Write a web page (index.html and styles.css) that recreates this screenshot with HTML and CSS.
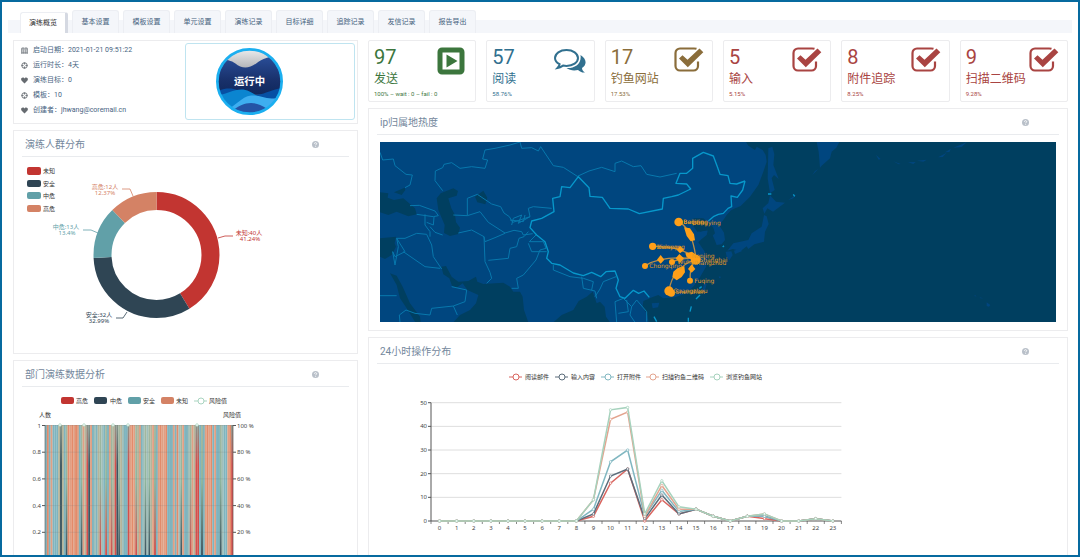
FILE: index.html
```html
<!DOCTYPE html>
<html lang="zh-CN">
<head>
<meta charset="utf-8">
<title>演练概览</title>
<link rel="stylesheet" href="styles.css">
</head>
<body>
<svg class="defs" aria-hidden="true">
  <symbol id="i-help" viewBox="0 0 14 14"><circle cx="7" cy="7" r="7" fill="#b9c0c9"/><path d="M4.8 5.4C4.8 2.6 9.3 2.7 9.3 5.3C9.3 7 7.2 7 7.2 8.6M7.2 10v1.5" fill="none" stroke="#fff" stroke-width="1.8"/></symbol>
  <symbol id="i-cal" viewBox="0 0 14 14"><path d="M1 2.500h12v11H1zM1 4.500h12M4 0v4M10 0v4M4.500 5v8M9.500 5v8M1 8h12M1 11h12" fill="none" stroke="#73787e" stroke-width="1.300"/></symbol>
  <symbol id="i-globe" viewBox="0 0 14 14"><circle cx="7" cy="7" r="5.500" fill="none" stroke="#73787e" stroke-width="2"/><path d="M7 1v4M7 9v4M1 7h4M9 7h4" stroke="#73787e" stroke-width="2.400"/></symbol>
  <symbol id="i-heart" viewBox="0 0 14 14"><path d="M7 13L1 7C-1 4 1 1 3.700 1C5.500 1 6.500 2 7 3C7.500 2 8.500 1 10.300 1C13 1 15 4 13 7z" fill="#666b70"/></symbol>
  <symbol id="i-check" viewBox="0 0 30 26"><path d="M22.500 1.800C21.500 1.500 21 1.500 20 1.500H6A4.500 4.500 0 0 0 1.500 6V19A4.500 4.500 0 0 0 6 23.500H19.500A4.500 4.500 0 0 0 24 19V14.500" fill="none" stroke="currentColor" stroke-width="2.200"/><path d="M5 11.500L8.500 8.200L13.500 12.800L25.500 1.500L29.300 5.300L13.800 20.300z" fill="currentColor"/></symbol>
</svg>
<div class="frame">
  <nav class="tabs">
    <button class="tab active">演练概览</button><button class="tab">基本设置</button><button class="tab">模板设置</button><button class="tab">单元设置</button><button class="tab">演练记录</button><button class="tab">目标详细</button><button class="tab">追踪记录</button><button class="tab">发信记录</button><button class="tab">报告导出</button>
  </nav>
  <main class="content">
    <div class="column">
      <section class="card info">
        <ul class="facts">
          <li><svg><use href="#i-cal"/></svg>启动日期：2021-01-21 09:51:22</li>
          <li><svg><use href="#i-globe"/></svg>运行时长：4天</li>
          <li><svg><use href="#i-heart"/></svg>演练目标：0</li>
          <li><svg><use href="#i-globe"/></svg>模板：10</li>
          <li><svg><use href="#i-heart"/></svg>创建者：jhwang@coremail.cn</li>
        </ul>
        <div class="status">
          <svg class="badge" viewBox="0 0 200 200">
            <defs>
              <clipPath id="disc"><circle cx="100" cy="100" r="94"/></clipPath>
              <linearGradient id="navy" x2="0" y2="1"><stop stop-color="#3058a8"/><stop offset=".7" stop-color="#18306a"/><stop offset="1" stop-color="#10285c"/></linearGradient>
              <linearGradient id="silver" x2="0" y2="1"><stop stop-color="#f0f0f0"/><stop offset="1" stop-color="#b4b6ba"/></linearGradient>
            </defs>
            <g clip-path="url(#disc)">
              <rect width="200" height="140" fill="url(#navy)"/>
              <path d="M0 0H200V24C165 22 140 30 120 46C95 64 75 60 58 46C45 36 30 34 0 34z" fill="url(#silver)"/>
              <path d="M0 130C45 112 60 125 90 136C130 150 155 125 200 118V200H0z" fill="#0650a4"/>
              <path d="M0 142C35 140 65 112 100 130C140 152 165 168 200 158V200H0z" fill="#0b85d0"/>
              <path d="M30 185C55 178 75 145 105 142C140 140 150 160 200 145V200H30z" fill="#3eaef0"/>
              <path d="M45 190C80 160 115 155 150 180L150 200H45z" fill="#2454a6"/>
            </g>
            <circle cx="100" cy="100" r="96" fill="none" stroke="#1baff0" stroke-width="8"/>
            <text x="100" y="111" class="badge-text">运行中</text>
          </svg>
        </div>
      </section>
      <section class="card">
        <header class="head"><h2>演练人群分布</h2><svg class="help"><use href="#i-help"/></svg></header>
        <svg class="chart" viewBox="22 156 327 196">
          <g class="legend">
            <rect x="27" y="166" width="14" height="8" rx="2" fill="#c23531"/><text x="43" y="172">未知</text>
            <rect x="27" y="179" width="14" height="7" rx="2" fill="#2f4554"/><text x="43" y="185">安全</text>
            <rect x="27" y="191" width="14" height="7" rx="2" fill="#61a0a8"/><text x="43" y="197">中危</text>
            <rect x="27" y="204" width="14" height="7" rx="2" fill="#d48265"/><text x="43" y="210">高危</text>
          </g>
          <g class="donut" transform="rotate(-90 156.500 254)">
            <circle cx="156.500" cy="254" r="54" pathLength="10000" stroke="#c23531" stroke-dasharray="4124 5876"/>
            <circle cx="156.500" cy="254" r="54" pathLength="10000" stroke="#2f4554" stroke-dasharray="3299 6701" stroke-dashoffset="-4124"/>
            <circle cx="156.500" cy="254" r="54" pathLength="10000" stroke="#61a0a8" stroke-dasharray="1340 8660" stroke-dashoffset="-7423"/>
            <circle cx="156.500" cy="254" r="54" pathLength="10000" stroke="#d48265" stroke-dasharray="1237 8763" stroke-dashoffset="-8763"/>
          </g>
          <g fill="none" stroke-width=".8">
            <path d="M218 237L225 235H233" stroke="#c23531"/><path d="M127 311L123 317H116" stroke="#2f4554"/>
            <path d="M98 232L91 229H83" stroke="#61a0a8"/><path d="M133 195L130 188H122" stroke="#d48265"/>
          </g>
          <g class="pie-labels">
            <g fill="#c23531"><text x="249" y="234">未知:40人</text><text x="250" y="240">41.24%</text></g>
            <g fill="#2f4554"><text x="99" y="316">安全:32人</text><text x="99" y="322">32.99%</text></g>
            <g fill="#61a0a8"><text x="66" y="228">中危:13人</text><text x="67" y="234">13.4%</text></g>
            <g fill="#d48265"><text x="105" y="188">高危:12人</text><text x="105" y="194">12.37%</text></g>
          </g>
        </svg>
      </section>
      <section class="card">
        <header class="head"><h2>部门演练数据分析</h2><svg class="help"><use href="#i-help"/></svg></header>
        <svg class="chart" id="departments" viewBox="22 386 327 200">
          <g class="legend">
            <rect x="61" y="396" width="13" height="7" rx="2" fill="#c23531"/><text x="76" y="402">高危</text>
            <rect x="94" y="396" width="13" height="7" rx="2" fill="#2f4554"/><text x="110" y="402">中危</text>
            <rect x="128" y="396" width="13" height="7" rx="2" fill="#61a0a8"/><text x="143" y="402">安全</text>
            <rect x="161" y="396" width="13" height="7" rx="2" fill="#d48265"/><text x="176" y="402">未知</text>
            <path d="M194 400H207" stroke="#a9d4c0"/><circle cx="201" cy="400" r="3" fill="#fff" stroke="#a9d4c0"/><text x="209" y="402">风险值</text>
            <text x="39" y="416">人数</text><text x="223" y="416">风险值</text>
          </g>
        </svg>
      </section>
    </div>
    <div class="column">
      <div class="stats">
        <article class="card stat green"><div class="copy"><strong>97</strong><span>发送</span><small>100% – wait : 0 – fail : 0</small></div>
          <svg viewBox="0 0 28 28"><rect x="3" y="3" width="22" height="22" rx="2" fill="none" stroke="currentColor" stroke-width="5"/><path d="M9.500 7.500L20.500 14L9.500 20.500z" fill="currentColor"/></svg></article>
        <article class="card stat blue"><div class="copy"><strong>57</strong><span>阅读</span><small>58.76%</small></div>
          <svg viewBox="0 0 32 28"><path d="M12.500 3C19 3 24 6.500 24 11S19 19 12.500 19C11 19 10 18.800 9 18.600C7 20 5 20.800 3.500 21C5 19.500 5.500 18.500 5.600 17.200C2.800 15.800 1 13.500 1 11C1 6.500 6 3 12.500 3z" fill="none" stroke="currentColor" stroke-width="2"/><path d="M26.500 8C33 12 33 18 28 21C28 23 29.500 24.500 31 25.500C28 25.800 26 24.800 24 23C19.500 24 15.500 23.200 12.500 21C20 21.500 28 17.500 26.500 8z" fill="currentColor"/></svg></article>
        <article class="card stat brown"><div class="copy"><strong>17</strong><span>钓鱼网站</span><small>17.53%</small></div><svg><use href="#i-check"/></svg></article>
        <article class="card stat red"><div class="copy"><strong>5</strong><span>输入</span><small>5.15%</small></div><svg><use href="#i-check"/></svg></article>
        <article class="card stat red"><div class="copy"><strong>8</strong><span>附件追踪</span><small>8.25%</small></div><svg><use href="#i-check"/></svg></article>
        <article class="card stat red"><div class="copy"><strong>9</strong><span>扫描二维码</span><small>9.28%</small></div><svg><use href="#i-check"/></svg></article>
      </div>
      <section class="card">
        <header class="head"><h2>ip归属地热度</h2><svg class="help"><use href="#i-help"/></svg></header>
        <svg class="map" viewBox="30 21 2028 540">
          <rect x="30" y="21" width="2028" height="540" fill="#003f60"/>
          <g fill="#00467f">
            <path d="M30 21H1128L1135 32L1155 45L1160 35L1178 45L1187 60L1190 80L1180 110L1165 150L1140 185L1112 213L1092 221L1083 226L1070 240L1060 255L1047 270L1062 293L1065 315L1055 328L1040 330L1032 310L1022 288L1008 270L995 250L980 258L968 270L982 290L1012 286L1015 296L995 312L985 322L1003 348L1012 368L1008 395L988 430L972 452L950 475L915 487L880 490L865 480L846 487L835 492L820 498L818 515L832 540L836 562H720L708 545L704 515L690 500L680 505L668 470L650 485L626 498L610 525L575 540L550 562H475L462 525L458 485L450 470L430 470L420 455L400 443L340 447L322 440L318 425L295 438L265 440L245 425L228 393L214 395L220 418L238 430L246 452L260 458L278 445L292 465L325 480L318 505L300 525L270 540L250 562H30z"/>
            <path d="M1195 40L1207 35L1213 58L1210 90L1226 132L1212 120L1205 130L1214 165L1200 175L1193 130z"/>
            <path d="M1200 181L1218 200L1245 203L1209 230L1192 220L1183 236L1178 220L1195 204z"/>
            <path d="M1182 240L1190 244L1196 267L1185 290L1182 320L1153 328L1135 342L1130 334L1112 348L1088 342L1072 347L1090 325L1135 315L1145 295L1175 275z"/>
            <path d="M1092 347L1112 340L1115 349L1095 357zM1067 350L1084 349L1088 360L1078 376L1070 365z"/>
            <path d="M1340 21H1408L1399 38L1385 50L1380 70L1355 92L1350 98L1346 50z"/>
            <path d="M1327 120L1345 102L1335 108zM1255 195L1280 178L1270 190zM1518 60L1532 72L1526 74zM1570 79L1592 87L1586 88zM1614 82L1637 81L1630 87zM1641 77L1670 74L1660 80zM1704 67L1730 53L1718 66zM1725 52L1743 41L1738 51zM1750 38L1790 22L1775 36zM1814 480L1820 484L1814 484zM1828 487L1840 490L1832 490zM1850 502L1861 510L1857 515L1850 513zM845 505L868 503L864 517L848 520zM1003 445L1010 448L1003 472L997 464zM1046 424L1054 426L1048 430z"/>
          </g>
          <g fill="#003f60">
            <path d="M30 172L55 175L53 188L72 195L100 190L135 220L140 238L115 244L80 230L55 240L30 232zM72 172L104 158L106 165L95 180zM200 190L212 175L250 160L264 168L260 182L235 190L244 220L255 240L258 262L270 278L265 297L240 303L222 294L224 270L205 225zM315 185L340 167L352 188L346 208L322 202zM30 310L78 305L74 325L78 335L65 360L45 372L30 365zM60 415L80 422L98 455L120 505L150 545L152 562H136L110 520L90 490L80 450z"/>
            <path d="M970 250L1000 250L1014 262L1030 278L1035 295L1020 310L1010 298L1015 285L990 290L978 272z"/>
          </g>
          <path class="borders" d="M30 52L38 75L70 72L75 92L108 118L127 120L120 150L105 158M218 167L205 150L195 137L196 108L218 98L222 88L245 83L270 100L305 95L345 100L353 75L338 72L345 45L375 40L420 30L450 21M450 21L455 40L485 38L505 48L512 35L550 92L580 97L622 124L657 108L695 97L735 110L735 85L755 78L790 95L813 92L830 118L870 126L920 115M120 212L148 211L195 228L205 242L190 245L140 238M165 238L165 270L180 290L180 305M170 262L190 270L192 246M180 275L195 292L218 300M292 242V190L322 178L365 207L392 215L402 234L418 245L428 262L480 245L475 220L490 215L545 220M250 240L292 242L330 230L355 262L405 294L432 286L455 290L460 300L488 296M265 294L305 285L342 305L345 320L375 308L405 295M342 305L345 380L360 412L365 430L350 445M355 376L415 370L420 340L440 335L447 310L462 305L475 290M498 300L478 320L520 320L528 340L510 345L498 375L460 420L440 430L445 460L425 460M475 325L485 350L530 350M550 390L550 405L600 425L640 430M635 425L640 460L675 468L680 490M640 430L670 440L665 465M675 485L690 462L700 440L738 425M75 390L85 335L80 310L105 310L140 295L170 298M170 298L185 330L190 365L215 402M80 310L105 350L75 365L68 350L75 390M100 350L165 395L210 400M30 482H80M90 562L88 540L108 525L135 535L180 540L185 520L250 513L285 500L290 465L245 455M250 513L262 540M740 562L735 500L760 490M760 490L785 515L800 495L830 530L830 560M770 495L775 530L745 535M785 515L780 540L795 562M425 270L430 250L455 240L445 265L480 245M420 255L460 260L465 240"/>
          <path class="china" d="M1125 138L1118 165L1102 187L1083 183L1085 215L1074 220L1060 235L1045 238L1030 245L1015 258M1125 138L1100 147L1080 145L1074 122L1050 118L1042 95L1030 63L1000 52L968 70L968 100L950 115L930 115L918 145L950 147L962 162L925 180L905 185L880 190L877 222L808 236L775 222L720 220L697 187L660 184L657 158L625 125L600 158L575 155L570 185L548 190L552 230L515 250L485 258L480 278L500 300L525 320L535 350L530 370L545 385L570 390L610 414L640 422L665 412L692 425L708 410L735 408L745 435L738 460L750 485L765 490L790 466L806 475L822 468L838 487M960 530L964 514M955 548L955 560M978 492L990 480M988 460L995 455M852 545L860 560M1194 177H1204M1270 178L1274 184M1058 336L1062 332"/>
          <g fill="none" stroke="#b98d49" stroke-width="4"><path d="M928 262Q966 280 978 370M848 334Q930 332 978 370M826 392Q875 360 978 372M906 381Q945 365 978 372M897 468Q906 400 978 372M962 437Q955 405 978 372"/></g>
          <g fill="#ff9f18"><circle cx="926" cy="261" r="13"/><circle cx="848" cy="334" r="11"/><circle cx="825" cy="393" r="9"/><circle cx="906" cy="381" r="9"/><circle cx="897" cy="468" r="14"/><circle cx="904" cy="474" r="11"/><circle cx="960" cy="437" r="9"/><circle cx="977" cy="374" r="15"/><path d="M942 277L960 280L972 298L975 316L962 319L950 303zM930 332L943 345L930 355L920 344zM872 360L883 374L872 386L861 374zM928 357L942 370L930 384L917 370zM946 355L966 350L980 361L969 375L950 367zM943 393L945 412L935 426L920 436L907 426L910 410L922 400zM965 388L976 402L965 413L954 402z"/></g>
          <g class="cities"><text x="940" y="268">Beijing</text><text x="940" y="268">Baoding</text><text x="966" y="269">Dongying</text><text x="860" y="341">Delong</text><text x="860" y="341">Xianyang</text><text x="838" y="400">Chongqing</text><text x="922" y="387">Wuhan</text><text x="965" y="370">Nanjing</text><text x="988" y="382">Shanghai</text><text x="978" y="389">Hangzhou</text><text x="973" y="444">Fuqing</text><text x="910" y="475">Guangzhou</text><text x="916" y="478">Shenzhen</text></g>
        </svg>
      </section>
      <section class="card">
        <header class="head"><h2>24小时操作分布</h2><svg class="help"><use href="#i-help"/></svg></header>
        <svg class="chart" id="hours" viewBox="377 364 682 200"></svg>
      </section>
    </div>
  </main>
</div>
<script src="charts.js"></script>
</body>
</html>
```
FILE: styles.css
```css
* { box-sizing: border-box; }
body {
  margin: 0;
  background: #fff;
  color: #47637f;
  font: 7px/15px Roboto, "Noto Sans CJK SC", sans-serif;
}
.defs { position: absolute; width: 0; height: 0; }
.frame {
  height: 100vh;
  overflow: hidden;
  border: 2px solid #076a9f;
  padding: 8px 6px 0;
}
.tabs {
  display: flex;
  gap: 4px;
  height: 23px;
  padding-left: 12px;
  background: linear-gradient(#fff 10px, #f4f6fa 10px);
}
.tab {
  width: 47px;
  padding: 0;
  border: 1px solid #eceef3;
  border-bottom: 0;
  border-radius: 3px 3px 0 0;
  background: #f4f6fa;
  color: #47637f;
  font: inherit;
}
.tab.active {
  width: 48px;
  margin-top: 2px;
  border-right: 3px solid #d5d9e2;
  background: #fff;
  color: #333;
}
.content {
  display: grid;
  grid-template-columns: minmax(0, 345fr) minmax(0, 700fr);
  gap: 10px;
  padding: 7px 4px 0 5px;
}
.column { display: flex; flex-direction: column; gap: 6px; }
.card { border: 1px solid #ececee; background: #fff; }
.info { display: flex; gap: 8px; padding: 2px 2px 3px; }
.facts { flex: 1; margin: 0; padding: 0 0 0 5px; list-style: none; white-space: nowrap; }
.facts li { display: flex; align-items: center; gap: 5px; height: 15px; }
.facts svg { width: 7px; height: 7px; }
.status {
  width: 170px;
  padding: 4px 30px;
  border: 1px solid #bfe4f0;
  border-radius: 3px;
}
.badge { display: block; width: 67px; height: 67px; }
.badge-text { fill: #fff; font-size: 31px; font-weight: 700; text-anchor: middle; }
.head {
  display: flex;
  align-items: center;
  justify-content: space-between;
  height: 26px;
  margin: 0 8px;
  padding: 2px 30px 0 3px;
  border-bottom: 1px solid #e9ebee;
}
.head h2 { margin: 0; color: #73879c; font-size: 10px; font-weight: 400; line-height: 14px; }
.help { width: 7px; height: 7px; }
.chart { display: block; width: auto; margin: 0 8px; font-family: "Noto Sans", "Noto Sans CJK SC", sans-serif; }
.map { display: block; width: auto; margin: 7px 11px 8px; }
.legend { fill: #333; font-size: 6px; }
.donut { fill: none; stroke-width: 18px; }
.pie-labels { font-size: 6px; text-anchor: middle; }
.axis { fill: #444; font-size: 6px; }
.axis .end { text-anchor: end; }
.axis .mid { text-anchor: middle; }
.borders { fill: none; stroke: #0878ad; stroke-width: 3px; stroke-linejoin: round; }
.china { fill: none; stroke: #0798cb; stroke-width: 4px; stroke-linejoin: round; }
.cities { fill: #e39a22; font-family: "DejaVu Sans", sans-serif; font-size: 18px; }
.stats { display: grid; grid-template-columns: repeat(6, minmax(0, 1fr)); gap: 10px; }
.stat { display: flex; padding: 5px 8px 3px 5px; border-radius: 2px; }
.stat svg { flex: none; width: 30px; height: 26px; margin-top: 1px; }
.stat.green svg { width: 28px; height: 28px; margin-right: 2px; }
.stat.blue svg { width: 32px; height: 28px; }
.copy { display: flex; flex: 1 1 0; flex-direction: column; min-width: 0; white-space: nowrap; }
.copy strong { font-size: 20px; font-weight: 400; line-height: 22px; }
.copy span { font-size: 12px; font-weight: 400; line-height: 22px; }
.copy small { font-size: 6px; line-height: 8px; }
.green { color: #3c763d; }
.blue { color: #31708f; }
.brown { color: #8a6d3b; }
.red { color: #a94442; }
```
FILE: charts.js
```js
const NS = "http://www.w3.org/2000/svg";
function add(parent, name, attrs, text) {
  const el = document.createElementNS(NS, name);
  for (const key in attrs) el.setAttribute(key, attrs[key]);
  if (text !== undefined) el.textContent = text;
  parent.appendChild(el);
  return el;
}

/* Operations per hour */
const hours = document.getElementById("hours");
const left = 431, step = 17.1, base = 521, unit = 2.366;
const right = left + step * 24;
const tail = [5, 2, 0, 2];
const series = [
  ["阅读邮件", "#d9655f", 510, [2, 16, 22, 0, 9, 3, ...tail, 1, 0, 0, 1, 0]],
  ["输入内容", "#5c6d7b", 556, [3, 19, 22, 1, 11, 3, ...tail, 2, 0, 0, 1, 0]],
  ["打开附件", "#81b7c1", 602, [5, 25, 30, 2, 13, 4, ...tail, 2, 0, 0, 1, 0]],
  ["扫描钓鱼二维码", "#e3a48f", 647, [9, 43, 46, 2, 15, 5, ...tail, 3, 0, 0, 1, 0]],
  ["浏览钓鱼网站", "#a6d2bd", 711, [9, 47, 48, 3, 17, 6, ...tail, 3, 0, 0, 1, 0]]
];
const labels = add(hours, "g", { class: "axis" });
for (let v = 0; v <= 50; v += 10) {
  const y = base - v * unit;
  add(hours, "path", { d: `M${left} ${y}H${right}`, stroke: v ? "#dedede" : "#555" });
  add(hours, "path", { d: `M${left - 3} ${y}H${left}`, stroke: "#555" });
  add(labels, "text", { x: left - 4, y: y + 2, class: "end" }, v);
}
add(hours, "path", { d: `M${left} ${base - 50 * unit}V${base}`, stroke: "#555" });
for (let i = 0; i <= 24; i++) {
  add(hours, "path", { d: `M${left + i * step} ${base}v3`, stroke: "#555", "stroke-width": 0.7 });
  if (i < 24) add(labels, "text", { x: left + (i + 0.5) * step, y: base + 9, class: "mid" }, i);
}
const legend = add(hours, "g", { class: "legend" });
for (const [name, color, x, tailValues] of series) {
  add(legend, "path", { d: `M${x - 1} 377h13`, stroke: color });
  add(legend, "circle", { cx: x + 6, cy: 377, r: 3, fill: "#fff", stroke: color });
  add(legend, "text", { x: x + 15, y: 379 }, name);
  const points = [0, 0, 0, 0, 0, 0, 0, 0, 0, ...tailValues]
    .map((v, i) => [left + (i + 0.5) * step, base - v * unit]);
  add(hours, "polyline", { points: points.join(" "), fill: "none", stroke: color, "stroke-width": 1.5 });
  for (const [cx, cy] of points) {
    add(hours, "circle", { cx, cy, r: 1.2, fill: "#fff", stroke: color, "stroke-width": 0.7 });
  }
}

/* Departments: t safe, o/O unknown, g mixed, d medium, r high; capitals D/R reach full risk */
const dept = document.getElementById("departments");
const defs = add(dept, "defs", {});
const gradients = { d: "#3c5661", r: "#d34f4b", D: "#3c5661", R: "#d34f4b" };
for (const key in gradients) {
  const full = key === key.toUpperCase();
  const grad = add(defs, "linearGradient", { id: "risk-" + key, x2: 0, y2: 1 });
  add(grad, "stop", { offset: 0, "stop-color": full ? "#86958a" : "#a5b79f" });
  add(grad, "stop", { offset: full ? 0.25 : 0.35, "stop-color": full ? gradients[key] : "#8eb59d" });
  add(grad, "stop", { offset: full ? 0.6 : 0.8, "stop-color": gradients[key] });
}
const flat = { t: "#7fb4be", T: "#9fbfba", o: "#e0a084", O: "#e38b6a", g: "#b5b59b" };
const bars = "tOtotttgDgtdOoOoOotdogRDotTtgrTtrtorgRDdgTttRoOorgotTdTdgortoOooOtttotOTdottTrogRRtdtoOoOtottdTttoOR";
const width = 188 / bars.length;
[...bars].forEach((key, i) => {
  add(dept, "rect", {
    x: 45 + i * width, y: 424, width: width + 0.1, height: 162,
    fill: flat[key] || `url(#risk-${key})`
  });
});
const scale = add(dept, "g", { class: "axis" });
for (let i = 0; i < 5; i++) {
  const y = 424.5 + i * 26.7;
  add(dept, "path", { d: `M45 ${y}H233`, stroke: "#777", "stroke-opacity": 0.3, "stroke-width": 0.6 });
  add(dept, "path", { d: `M42 ${y}h3M233 ${y}h3`, stroke: "#555" });
  add(scale, "text", { x: 41, y: y + 2, class: "end" }, (10 - i * 2) / 10);
  add(scale, "text", { x: 237, y: y + 2 }, 100 - i * 20 + " %");
}
add(dept, "path", { d: "M45 424V586M233 424V586", stroke: "#555", "stroke-width": 0.6 });
for (const cx of [60, 84, 113, 128, 197]) {
  add(dept, "circle", { cx, cy: 424, r: 1.3, fill: "#fff", stroke: "#a6d2bd", "stroke-width": 0.7 });
}
```
